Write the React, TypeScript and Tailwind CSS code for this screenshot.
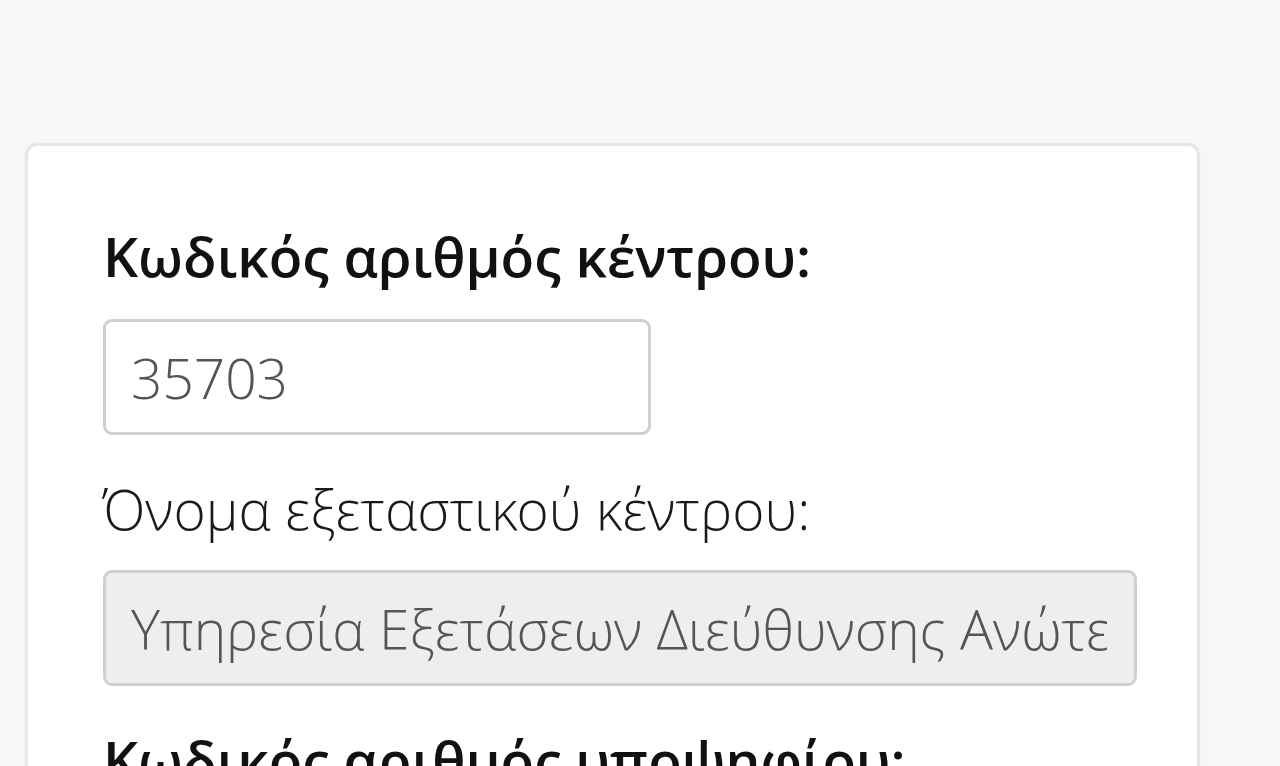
const font = { fontFamily: '"Open Sans", "Noto Sans", sans-serif' }
const light = { fontFamily: '"Open Sans Light", "Open Sans", "Noto Sans", sans-serif' }

function Field({ label, value, bold, disabled, width }: { label: string; value: string; bold?: boolean; disabled?: boolean; width: string }) {
  return (
    <div className="flex flex-col">
      <label
        className={
          bold
            ? 'mb-[30px] text-[55px] leading-[1.22] font-semibold text-[#111]'
            : 'mb-[28px] text-[55px] leading-[1.22] font-light text-[#1a1a1a]'
        }
        style={bold ? font : light}
      >
        {label}
      </label>
      <input
        readOnly
        disabled={disabled}
        value={value}
        className={`${width} h-[116px] rounded-[9px] border-[3px] border-[#d0d0d0] pl-[25px] pr-[27px] text-[55px] font-light text-[#555] outline-none ${
          disabled ? 'bg-[#eeeeee]' : 'bg-white'
        }`}
        style={light}
      />
    </div>
  )
}

export default function App() {
  return (
    <main className="h-[766px] overflow-hidden bg-[#f7f7f7] pt-[143px] pl-[25px]" style={font}>
      <div className="w-[1175px] rounded-[12px] border-[3px] border-[#e6e6e6] bg-white pt-[76px] pl-[75px] pb-[80px] shadow-[0_0_3px_rgba(0,0,0,0.04)]">
        <div className="mb-[40px]">
          <Field label="Κωδικός αριθμός κέντρου:" value="35703" bold width="w-[548px]" />
        </div>
        <div className="mb-[40px]">
          <Field
            label="Όνομα εξεταστικού κέντρου:"
            value="Υπηρεσία Εξετάσεων Διεύθυνσης Ανώτερης Εκπαίδευσης"
            disabled
            width="w-[1034px]"
          />
        </div>
        <Field label="Κωδικός αριθμός υποψηφίου:" value="" bold width="w-[548px]" />
      </div>
    </main>
  )
}
